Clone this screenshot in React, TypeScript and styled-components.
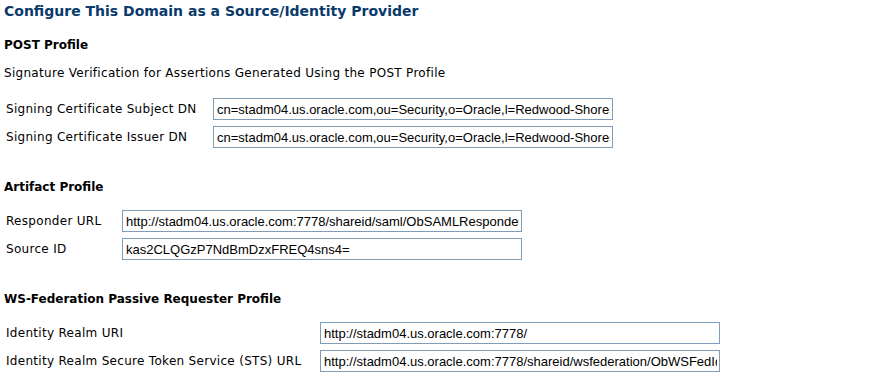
import React from 'react';
import styled, { createGlobalStyle } from 'styled-components';

type Field = { label: string; value: string };

type Section = {
    heading: string;
    description?: string;
    labelWidth: number;
    fields: Field[];
};

const sections: Section[] = [
    {
        heading: 'POST Profile',
        description: 'Signature Verification for Assertions Generated Using the POST Profile',
        labelWidth: 207,
        fields: [
            {
                label: 'Signing Certificate Subject DN',
                value: 'cn=stadm04.us.oracle.com,ou=Security,o=Oracle,l=Redwood-Shores,st=California,c=US',
            },
            {
                label: 'Signing Certificate Issuer DN',
                value: 'cn=stadm04.us.oracle.com,ou=Security,o=Oracle,l=Redwood-Shores,st=California,c=US',
            },
        ],
    },
    {
        heading: 'Artifact Profile',
        labelWidth: 116,
        fields: [
            {
                label: 'Responder URL',
                value: 'http://stadm04.us.oracle.com:7778/shareid/saml/ObSAMLResponder',
            },
            { label: 'Source ID', value: 'kas2CLQGzP7NdBmDzxFREQ4sns4=' },
        ],
    },
    {
        heading: 'WS-Federation Passive Requester Profile',
        labelWidth: 314,
        fields: [
            { label: 'Identity Realm URI', value: 'http://stadm04.us.oracle.com:7778/' },
            {
                label: 'Identity Realm Secure Token Service (STS) URL',
                value: 'http://stadm04.us.oracle.com:7778/shareid/wsfederation/ObWSFedIdentityProvider',
            },
        ],
    },
];

const App: React.FC = () => {
    return (
        <>
            <GlobalStyle />
            <Page>
                <Title>Configure This Domain as a Source/Identity Provider</Title>
                {sections.map((section) => (
                    <SectionBlock key={section.heading}>
                        <Heading>{section.heading}</Heading>
                        {section.description && <Description>{section.description}</Description>}
                        <FieldGrid $labelWidth={section.labelWidth}>
                            {section.fields.map((field) => (
                                <React.Fragment key={field.label}>
                                    <Label>{field.label}</Label>
                                    <TextInput type="text" defaultValue={field.value} readOnly />
                                </React.Fragment>
                            ))}
                        </FieldGrid>
                    </SectionBlock>
                ))}
            </Page>
        </>
    );
};

const GlobalStyle = createGlobalStyle`
    html, body {
        margin: 0;
        padding: 0;
        background: #ffffff;
    }
    body {
        font-family: "DejaVu Sans", Tahoma, Verdana, sans-serif;
        color: #000000;
    }
`;

const Page = styled.div`
    width: 879px;
    height: 381px;
    overflow: hidden;
    padding: 2px 0 0 4px;
    box-sizing: border-box;
`;

const Title = styled.h1`
    margin: 0;
    font-size: 14px;
    line-height: 18px;
    font-weight: bold;
    color: #0a3a6b;
`;

const SectionBlock = styled.section`
    margin-top: 17px;

    & + & {
        margin-top: 31px;
    }
`;

const Heading = styled.h2`
    margin: 0;
    font-size: 12px;
    line-height: 16px;
    font-weight: bold;
    color: #000000;
`;

const Description = styled.p`
    margin: 12px 0 0;
    font-size: 12px;
    line-height: 16px;
    letter-spacing: 0.3px;
`;

const FieldGrid = styled.div<{ $labelWidth: number }>`
    display: grid;
    grid-template-columns: ${(p) => p.$labelWidth}px 400px;
    row-gap: 6px;
    margin-top: 15px;
    padding-left: 2px;
    align-items: center;

    p + & {
        margin-top: 17px;
    }
`;

const Label = styled.span`
    font-size: 12px;
    line-height: 16px;
    letter-spacing: 0.3px;
`;

const TextInput = styled.input`
    width: 400px;
    height: 22px;
    box-sizing: border-box;
    margin: 0;
    padding: 0 2px 0 3px;
    border: 1px solid #7f9db9;
    background: #ffffff;
    font-family: "Liberation Sans", Arial, sans-serif;
    font-size: 13px;
    color: #000000;
    outline: none;
`;

export default App;
